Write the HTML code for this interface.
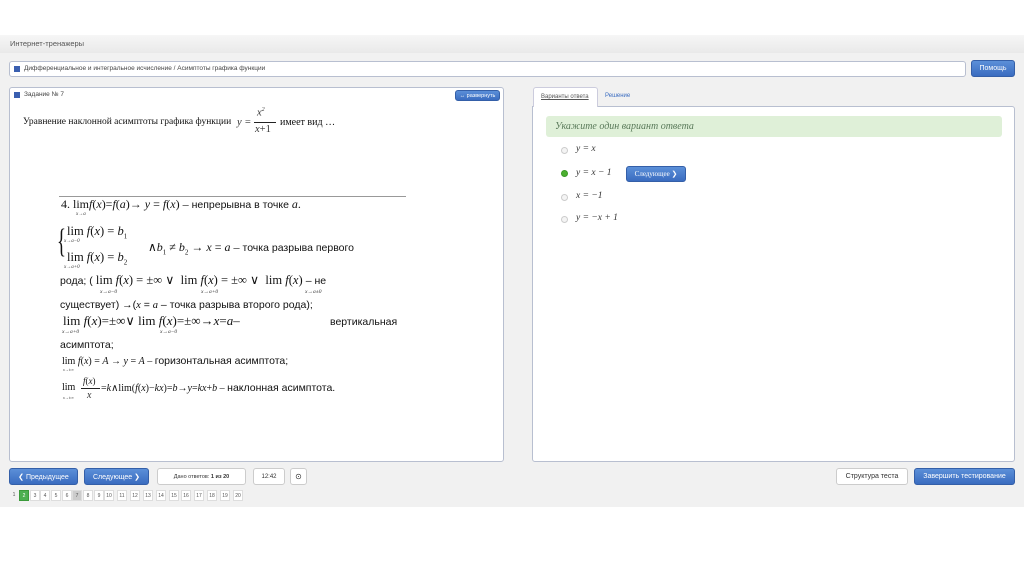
<!DOCTYPE html>
<html><head><meta charset="utf-8"><style>
*{margin:0;padding:0;box-sizing:border-box}
body{width:1024px;height:574px;background:#fff;position:relative;overflow:hidden;font-family:"Liberation Sans",sans-serif;color:#333}
.a{position:absolute}
.gray{left:0;top:35px;width:1024px;height:472px;background:#f1f1f1}
.hdr{left:0;top:35px;width:1024px;height:18px;background:linear-gradient(#f6f6f6,#e9e9e9);font-size:7.5px;color:#555;padding:4px 10px}
.box{background:#fff;border:1px solid #b8bfd0;border-radius:3px}
.btn,.wbtn{display:flex;align-items:center;justify-content:center;white-space:nowrap}
.btn{background:linear-gradient(#5b8fd8,#3a6cc0);color:#fff;border:1px solid #345fa8;border-radius:3px;font-size:7px}
.wbtn{background:#fff;border:1px solid #ccc;border-radius:3px;font-size:6.5px;color:#333}
.sq{width:6px;height:6px;background:#3a5fb0}
.s{font-family:"Liberation Serif",serif;color:#111;white-space:nowrap}
.m{font-family:"Liberation Serif",serif;font-style:italic}
.pg{top:490px;width:10px;height:11px;border:1px solid #ddd;background:#fff;font-size:5px;text-align:center;line-height:10px;color:#555}
.rad{width:7px;height:7px;border-radius:50%;border:1px solid #ccc;background:#f4f4f4}
.opt{font-family:"Liberation Serif",serif;font-style:italic;font-size:9.5px;color:#333}
.ru{font-family:"Liberation Sans",sans-serif;font-size:10.5px;color:#111}
</style></head><body>
<div class="a gray"></div>
<div class="a hdr">Интернет-тренажеры</div>
<div class="a box" style="left:9px;top:61px;width:957px;height:16px"></div>
<div class="a sq" style="left:14px;top:66px"></div>
<div class="a" style="left:24px;top:65px;font-size:6.5px;color:#444">Дифференциальное и интегральное исчисление / Асимптоты графика функции</div>
<div class="a btn" style="left:971px;top:60px;width:44px;height:17px">Помощь</div>

<div class="a box" style="left:9px;top:87px;width:495px;height:375px"></div>
<div class="a sq" style="left:14px;top:92px"></div>
<div class="a" style="left:24px;top:91px;font-size:6.5px;color:#444">Задание № 7</div>
<div class="a btn" style="left:455px;top:90px;width:45px;height:11px;font-size:5.5px">↔ развернуть</div>
<div class="a s" style="left:23px;top:117px;font-size:9.5px">Уравнение наклонной асимптоты графика функции</div>
<div class="a m" style="left:237px;top:117px;font-size:10.5px">y =</div>
<div class="a m" style="left:257px;top:107px;font-size:10.5px">x<sup style="font-size:6px">2</sup></div>
<div class="a" style="left:254px;top:122px;width:22px;height:1px;background:#222"></div>
<div class="a m" style="left:255px;top:124px;font-size:10.5px">x<span style="font-style:normal">+1</span></div>
<div class="a s" style="left:280px;top:117px;font-size:10px">имеет вид …</div>

<div class="a" style="left:59px;top:196px;width:347px;height:1px;background:#999"></div>
<div class="a s" style="left:61px;top:197px;font-size:12px;line-height:14px">4. lim<i>f</i>(<i>x</i>)=<i>f</i>(<i>a</i>)→ <i>y</i> = <i>f</i>(<i>x</i>) – <span class="ru">непрерывна в точке</span> <i>a</i>.</div>
<div class="a m" style="left:76px;top:212px;font-size:5px">x→a</div>
<div class="a s" style="left:57px;top:218px;font-size:34px;line-height:48px;transform:scaleX(.55);transform-origin:left">{</div>
<div class="a s" style="left:67px;top:224px;font-size:12.5px">lim <i>f</i>(<i>x</i>) = <i>b</i><sub style="font-size:7px">1</sub></div>
<div class="a m" style="left:64px;top:239px;font-size:5px">x→a−0</div>
<div class="a s" style="left:67px;top:250px;font-size:12.5px">lim <i>f</i>(<i>x</i>) = <i>b</i><sub style="font-size:7px">2</sub></div>
<div class="a m" style="left:64px;top:265px;font-size:5px">x→a+0</div>
<div class="a s" style="left:148px;top:240px;font-size:12px">∧<i>b</i><sub style="font-size:7px">1</sub> ≠ <i>b</i><sub style="font-size:7px">2</sub> → <i>x</i> = <i>a</i> – <span class="ru">точка разрыва первого</span></div>
<div class="a s" style="left:60px;top:272px;font-size:12.5px"><span class="ru">рода; (</span> lim <i>f</i>(<i>x</i>) = ±∞ ∨ &nbsp;lim <i>f</i>(<i>x</i>) = ±∞ ∨ &nbsp;lim <i>f</i>(<i>x</i>) <span class="ru">– не</span></div>
<div class="a m" style="left:100px;top:289px;font-size:5.5px">x→a−0</div>
<div class="a m" style="left:201px;top:289px;font-size:5.5px">x→a+0</div>
<div class="a m" style="left:305px;top:289px;font-size:5.5px">x→a±0</div>
<div class="a ru" style="left:60px;top:299px">существует) →(<i class="m">x</i> = <i class="m">a</i> – точка разрыва второго рода);</div>
<div class="a s" style="left:63px;top:313px;font-size:13px">lim <i>f</i>(<i>x</i>)=±∞∨ lim <i>f</i>(<i>x</i>)=±∞→<i>x</i>=<i>a</i>–</div>
<div class="a ru" style="left:330px;top:316px">вертикальная</div>
<div class="a m" style="left:62px;top:329px;font-size:5.5px">x→a+0</div>
<div class="a m" style="left:160px;top:329px;font-size:5.5px">x→a−0</div>
<div class="a ru" style="left:60px;top:339px">асимптота;</div>
<div class="a s" style="left:62px;top:355px;font-size:10px">lim <i>f</i>(<i>x</i>) = <i>A</i> → <i>y</i> = <i>A</i> – <span class="ru">горизонтальная асимптота;</span></div>
<div class="a m" style="left:63px;top:367px;font-size:4px">x→±∞</div>
<div class="a s" style="left:83px;top:376px;font-size:9px"><i>f</i>(<i>x</i>)</div>
<div class="a" style="left:81px;top:388px;width:19px;height:1px;background:#222"></div>
<div class="a s" style="left:62px;top:382px;font-size:10px">lim</div>
<div class="a m" style="left:87px;top:390px;font-size:10px">x</div>
<div class="a s" style="left:101px;top:382px;font-size:10px">=<i>k</i>∧lim(<i>f</i>(<i>x</i>)−<i>kx</i>)=<i>b</i>→<i>y</i>=<i>kx</i>+<i>b</i> – <span class="ru">наклонная асимптота.</span></div>
<div class="a m" style="left:63px;top:395px;font-size:4px">x→±∞</div>

<div class="a box" style="left:532px;top:106px;width:483px;height:356px;border-radius:0 3px 3px 3px"></div>
<div class="a" style="left:533px;top:87px;width:65px;height:20px;background:#fff;border:1px solid #ccd;border-bottom:none;border-radius:3px 3px 0 0;font-size:6px;color:#555;text-decoration:underline;padding:6px 0 0 7px">Варианты ответа</div>
<div class="a" style="left:605px;top:93px;font-size:6px;color:#3a6cc0">Решение</div>
<div class="a" style="left:546px;top:116px;width:456px;height:21px;background:#dff0d8;border-radius:3px"></div>
<div class="a m" style="left:555px;top:121px;font-size:10px;color:#5a7a5a">Укажите один вариант ответа</div>
<div class="a rad" style="left:561px;top:147px"></div><div class="a opt" style="left:576px;top:144px">y = x</div>
<div class="a rad" style="left:561px;top:170px;background:#4caf30;border-color:#3a9a25"></div><div class="a opt" style="left:576px;top:168px">y = x − 1</div>
<div class="a btn" style="left:626px;top:166px;width:60px;height:16px;font-family:'Liberation Serif',serif">Следующее ❯</div>
<div class="a rad" style="left:561px;top:194px"></div><div class="a opt" style="left:576px;top:191px">x = −1</div>
<div class="a rad" style="left:561px;top:216px"></div><div class="a opt" style="left:576px;top:213px">y = −x + 1</div>

<div class="a btn" style="left:9px;top:468px;width:69px;height:17px">❮ Предыдущее</div>
<div class="a btn" style="left:84px;top:468px;width:65px;height:17px">Следующее ❯</div>
<div class="a wbtn" style="left:157px;top:468px;width:89px;height:17px;font-size:5.5px">Дано ответов:&nbsp;<b>1 из 20</b></div>
<div class="a wbtn" style="left:253px;top:468px;width:32px;height:17px;font-size:6px">12:42</div>
<div class="a wbtn" style="left:290px;top:468px;width:17px;height:17px;font-size:8px">⊙</div>
<div class="a wbtn" style="left:836px;top:468px;width:72px;height:17px;font-size:7px">Структура теста</div>
<div class="a btn" style="left:914px;top:468px;width:101px;height:17px">Завершить тестирование</div>

<div class="a pg" style="left:9px;border:none;background:none">1</div>
<div class="a pg" style="left:19px;background:#4caf50;color:#fff;border-color:#3a9a3a">2</div>
<div class="a pg" style="left:30px">3</div><div class="a pg" style="left:40px">4</div><div class="a pg" style="left:51px">5</div><div class="a pg" style="left:62px">6</div>
<div class="a pg" style="left:72px;background:#ccc">7</div><div class="a pg" style="left:83px">8</div><div class="a pg" style="left:94px">9</div>
<div class="a pg" style="left:104px">10</div><div class="a pg" style="left:117px">11</div><div class="a pg" style="left:130px">12</div><div class="a pg" style="left:143px">13</div><div class="a pg" style="left:156px">14</div><div class="a pg" style="left:169px">15</div><div class="a pg" style="left:181px">16</div><div class="a pg" style="left:194px">17</div><div class="a pg" style="left:207px">18</div><div class="a pg" style="left:220px">19</div><div class="a pg" style="left:233px">20</div>
</body></html>
